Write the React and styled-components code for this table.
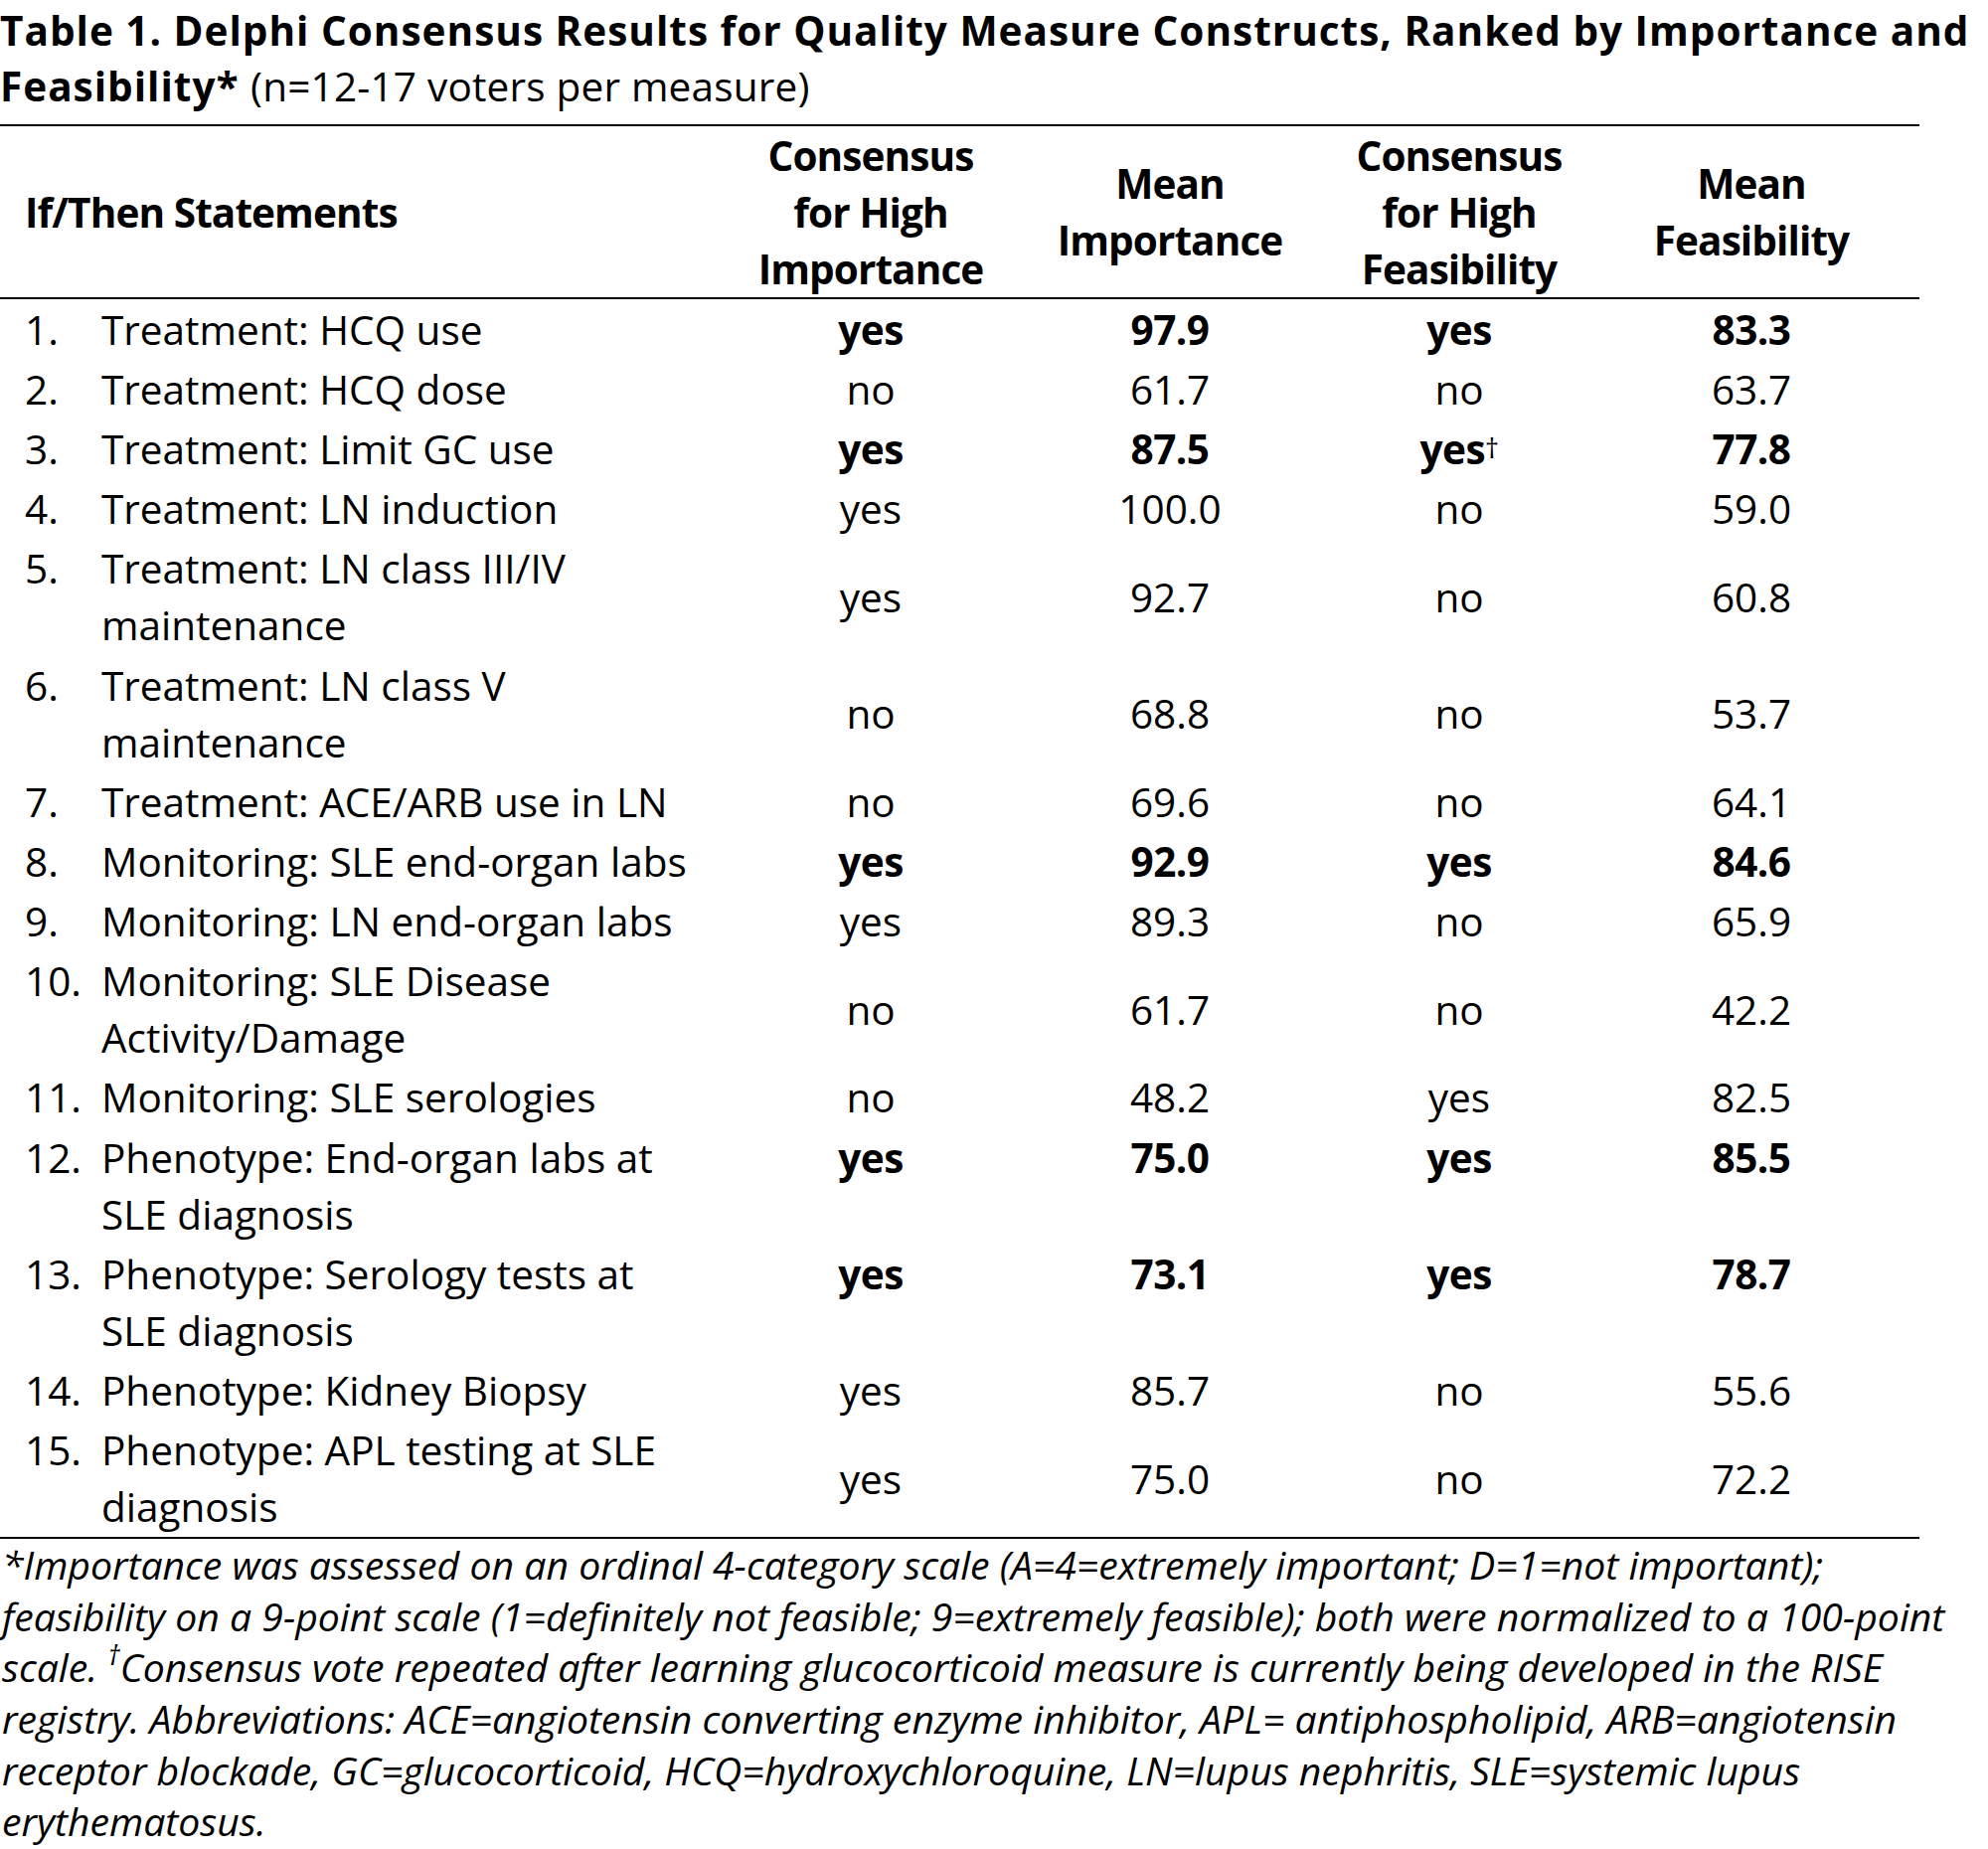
import React from 'react';
import styled, { createGlobalStyle } from 'styled-components';

const GlobalStyle = createGlobalStyle`
  body {
    margin: 0;
    background: #fff;
    color: #000;
    font-family: "Open Sans", "Liberation Sans", sans-serif;
  }
`;

const Page = styled.main`
  width: 2000px;
  background: #fff;
`;

const Title = styled.h1`
  margin: 0 0 10px;
  padding-top: 3px;
  font-size: 40.5px;
  line-height: 56px;
  font-weight: 700;
  letter-spacing: 1px;
  white-space: nowrap;
`;

const TitleNote = styled.span`
  font-weight: 400;
  letter-spacing: 0.2px;
`;

const Table = styled.div`
  width: 1931px;
  border-top: 2px solid #000;
  border-bottom: 2px solid #000;
`;

const COLS = '741px 270px 332px 250px 338px';

const HeadRow = styled.div`
  display: grid;
  grid-template-columns: ${COLS};
  border-bottom: 2px solid #000;
  padding: 0.5px 0;
`;

const HeadCell = styled.div`
  display: flex;
  align-items: center;
  justify-content: ${({ left }) => (left ? 'flex-start' : 'center')};
  padding-left: ${({ left }) => (left ? '25px' : '0')};
  text-align: center;
  font-size: 40.5px;
  line-height: 57px;
  font-weight: 700;
  letter-spacing: -0.9px;
  white-space: nowrap;
`;

const Row = styled.div`
  display: grid;
  grid-template-columns: ${COLS};
  padding: 1.6px 0;
  font-size: 40.5px;
  line-height: 57px;
`;

const Statement = styled.div`
  display: flex;
  padding-left: 25px;
  white-space: nowrap;
`;

const Num = styled.span`
  flex: 0 0 77px;
`;

const Value = styled.div`
  display: flex;
  justify-content: center;
  align-items: ${({ top }) => (top ? 'flex-start' : 'center')};
  font-weight: ${({ bold }) => (bold ? 700 : 400)};
  letter-spacing: ${({ bold }) => (bold ? '-0.5px' : '0')};
`;

const Sup = styled.sup`
  font-size: 68%;
  line-height: 0;
  vertical-align: 0.62em;
  font-weight: 400;
`;

const Notes = styled.p`
  margin: 0;
  font-size: 39.2px;
  line-height: 51.7px;
  font-style: italic;
  white-space: nowrap;
  padding-left: 2px;
`;

const rows = [
  { n: '1.', s: ['Treatment: HCQ use'], v: ['yes', '97.9', 'yes', '83.3'], bold: true },
  { n: '2.', s: ['Treatment: HCQ dose'], v: ['no', '61.7', 'no', '63.7'] },
  { n: '3.', s: ['Treatment: Limit GC use'], v: ['yes', '87.5', 'yes†', '77.8'], bold: true },
  { n: '4.', s: ['Treatment: LN induction'], v: ['yes', '100.0', 'no', '59.0'] },
  { n: '5.', s: ['Treatment: LN class III/IV', 'maintenance'], v: ['yes', '92.7', 'no', '60.8'] },
  { n: '6.', s: ['Treatment: LN class V', 'maintenance'], v: ['no', '68.8', 'no', '53.7'] },
  { n: '7.', s: ['Treatment: ACE/ARB use in LN'], v: ['no', '69.6', 'no', '64.1'] },
  { n: '8.', s: ['Monitoring: SLE end-organ labs'], v: ['yes', '92.9', 'yes', '84.6'], bold: true },
  { n: '9.', s: ['Monitoring: LN end-organ labs'], v: ['yes', '89.3', 'no', '65.9'] },
  { n: '10.', s: ['Monitoring: SLE Disease', 'Activity/Damage'], v: ['no', '61.7', 'no', '42.2'] },
  { n: '11.', s: ['Monitoring: SLE serologies'], v: ['no', '48.2', 'yes', '82.5'] },
  { n: '12.', s: ['Phenotype: End-organ labs at', 'SLE diagnosis'], v: ['yes', '75.0', 'yes', '85.5'], bold: true, top: true },
  { n: '13.', s: ['Phenotype: Serology tests at', 'SLE diagnosis'], v: ['yes', '73.1', 'yes', '78.7'], bold: true, top: true },
  { n: '14.', s: ['Phenotype: Kidney Biopsy'], v: ['yes', '85.7', 'no', '55.6'] },
  { n: '15.', s: ['Phenotype: APL testing at SLE', 'diagnosis'], v: ['yes', '75.0', 'no', '72.2'] },
];

const renderValue = (text) =>
  text.endsWith('†') ? (
    <>
      {text.slice(0, -1)}
      <Sup>†</Sup>
    </>
  ) : (
    text
  );

const App = () => (
  <Page>
    <GlobalStyle />
    <Title>
      Table 1. Delphi Consensus Results for Quality Measure Constructs, Ranked by Importance and
      <br />
      Feasibility* <TitleNote>(n=12-17 voters per measure)</TitleNote>
    </Title>

    <Table>
      <HeadRow>
        <HeadCell left>If/Then Statements</HeadCell>
        <HeadCell>
          Consensus
          <br />
          for High
          <br />
          Importance
        </HeadCell>
        <HeadCell>
          Mean
          <br />
          Importance
        </HeadCell>
        <HeadCell>
          Consensus
          <br />
          for High
          <br />
          Feasibility
        </HeadCell>
        <HeadCell>
          Mean
          <br />
          Feasibility
        </HeadCell>
      </HeadRow>

      {rows.map((r) => (
        <Row key={r.n}>
          <Statement>
            <Num>{r.n}</Num>
            <span>
              {r.s.map((line, i) => (
                <React.Fragment key={i}>
                  {i > 0 && <br />}
                  {line}
                </React.Fragment>
              ))}
            </span>
          </Statement>
          {r.v.map((val, i) => (
            <Value key={i} bold={r.bold} top={r.top}>
              {renderValue(val)}
            </Value>
          ))}
        </Row>
      ))}
    </Table>

    <Notes>
      *Importance was assessed on an ordinal 4-category scale (A=4=extremely important; D=1=not important);
      <br />
      feasibility on a 9-point scale (1=definitely not feasible; 9=extremely feasible); both were normalized to a 100-point
      <br />
      scale. <Sup>†</Sup>Consensus vote repeated after learning glucocorticoid measure is currently being developed in the RISE
      <br />
      registry. Abbreviations: ACE=angiotensin converting enzyme inhibitor, APL= antiphospholipid, ARB=angiotensin
      <br />
      receptor blockade, GC=glucocorticoid, HCQ=hydroxychloroquine, LN=lupus nephritis, SLE=systemic lupus
      <br />
      erythematosus.
    </Notes>
  </Page>
);

export default App;
